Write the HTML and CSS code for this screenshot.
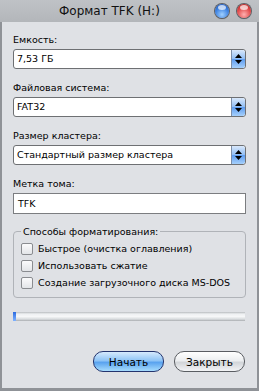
FILE: index.html
```html
<!DOCTYPE html>
<html>
<head>
<meta charset="utf-8">
<link rel="stylesheet" href="styles.css">
</head>
<body>
<div class="window">
  <div class="titlebar">
    <span class="title">Формат TFK (H:)</span>
    <span class="orb orb-blue"></span>
    <span class="orb orb-red"></span>
  </div>
  <div class="content">
    <div class="label first">Емкость:</div>
    <div class="select"><span class="val">7,53 ГБ</span><span class="arrow"><svg width="7" height="10" viewBox="0 0 7 10"><path d="M3.5 0 L7 4 L0 4 Z M0 6 L7 6 L3.5 10 Z" fill="#000"/></svg></span></div>
    <div class="label">Файловая система:</div>
    <div class="select"><span class="val">FAT32</span><span class="arrow"><svg width="7" height="10" viewBox="0 0 7 10"><path d="M3.5 0 L7 4 L0 4 Z M0 6 L7 6 L3.5 10 Z" fill="#000"/></svg></span></div>
    <div class="label">Размер кластера:</div>
    <div class="select"><span class="val">Стандартный размер кластера</span><span class="arrow"><svg width="7" height="10" viewBox="0 0 7 10"><path d="M3.5 0 L7 4 L0 4 Z M0 6 L7 6 L3.5 10 Z" fill="#000"/></svg></span></div>
    <div class="label">Метка тома:</div>
    <div class="input">TFK</div>
    <div class="group">
      <div class="legend">Способы форматирования:</div>
      <div class="check"><span class="box"></span>Быстрое (очистка оглавления)</div>
      <div class="check"><span class="box"></span>Использовать сжатие</div>
      <div class="check"><span class="box"></span>Создание загрузочного диска MS-DOS</div>
    </div>
    <div class="progress"><span class="fill"></span></div>
    <div class="buttons">
      <span class="btn btn-primary">Начать</span>
      <span class="btn">Закрыть</span>
    </div>
  </div>
</div>
</body>
</html>
```
FILE: styles.css
```css
html, body { margin: 0; padding: 0; }
body { background: #8f9297; font-family: "DejaVu Sans", sans-serif; font-size: 9.5px; color: #000; }
.window {
  width: 255px; height: 388px;
  border: 2px solid #8f9297; border-top: 0; border-bottom-width: 3px;
  background: #dfe1e5;
  display: flex; flex-direction: column;
}
.titlebar {
  height: 22px; margin: 0 -2px; padding: 0 2px;
  background: linear-gradient(#bfc2c6, #b3b6ba);
  position: relative;
}
.title {
  position: absolute; left: 59px; top: 4px;
  font-size: 12px; font-weight: normal; line-height: 15px; color: #111;
}
.orb {
  position: absolute; top: 4px; width: 14px; height: 14px; border-radius: 50%;
  box-shadow: 0 0 0 1px #5c5f64, 0 1px 1px rgba(0,0,0,.3);
}
.orb-blue { left: 215px; background: radial-gradient(circle at 50% 75%, #9fd0ff 0%, #3a7fe0 55%, #1c4fb0 100%); }
.orb-red { left: 237px; background: radial-gradient(circle at 50% 75%, #ffb0b0 0%, #e04848 55%, #a81818 100%); }
.orb::after {
  content: ""; position: absolute; left: 3px; top: 1px; width: 8px; height: 5px; border-radius: 50%;
  background: rgba(255,255,255,.7);
}
.content { padding: 0 11px; display: flex; flex-direction: column; }
.label { line-height: 13px; margin-top: 12px; margin-bottom: 3px; }
.label.first { margin-top: 11px; }
.select {
  height: 18px; border: 1px solid #6e7073; border-radius: 3px; background: #fff;
  display: flex; align-items: center; overflow: hidden;
}
.select .val { flex: 1; padding-left: 3px; line-height: 18px; }
.arrow {
  width: 13px; height: 18px; border-left: 1px solid #7c8ea8;
  background: linear-gradient(#d9e8fb, #8fbdf4 50%, #5d9cf0 51%, #a6d0fb);
  border-radius: 0 2px 2px 0;
  display: flex; align-items: center; justify-content: center;
}
.input {
  height: 19px; border: 1px solid #7b7d80; background: #fff;
  line-height: 19px; padding-left: 4px;
}
.group {
  margin-top: 17px; border: 1px solid #b0b3b8; border-radius: 4px;
  padding: 8px 0 6px 7px; position: relative;
}
.legend {
  position: absolute; top: -7px; left: 7px; padding: 0 2px; background: #dfe1e5; line-height: 13px;
}
.check { display: flex; align-items: center; height: 17px; }
.box {
  width: 10px; height: 10px; border: 1px solid #8a8c90; border-radius: 2px; margin-right: 5px;
  background: linear-gradient(#fbfbfc, #e3e5e8);
}
.progress {
  margin-top: 14px; height: 9px; margin-right: 1px;
  background: linear-gradient(#b8bbbf 0, #eef0f2 2px, #f6f7f8 50%, #d8dbde 80%, #a9acb0 100%);
  position: relative;
}
.fill { position: absolute; left: 0; top: 0; width: 3px; height: 9px; background: linear-gradient(#2c6be0, #7fb2ff); }
.buttons { display: flex; justify-content: flex-end; gap: 10px; margin-top: 30px; padding-right: 1px; }
.btn {
  width: 69px; height: 19px; border: 1px solid #5a5d62; border-radius: 10px;
  display: flex; align-items: center; justify-content: center; font-size: 10.5px;
  background: linear-gradient(#ffffff, #eceef0 45%, #d2d5d9 55%, #f3f4f6);
}
.btn-primary {
  border-color: #24346e;
  background: linear-gradient(#d6eafd, #8fc4f6 45%, #5aa3ef 55%, #a7dcfd);
}
```
